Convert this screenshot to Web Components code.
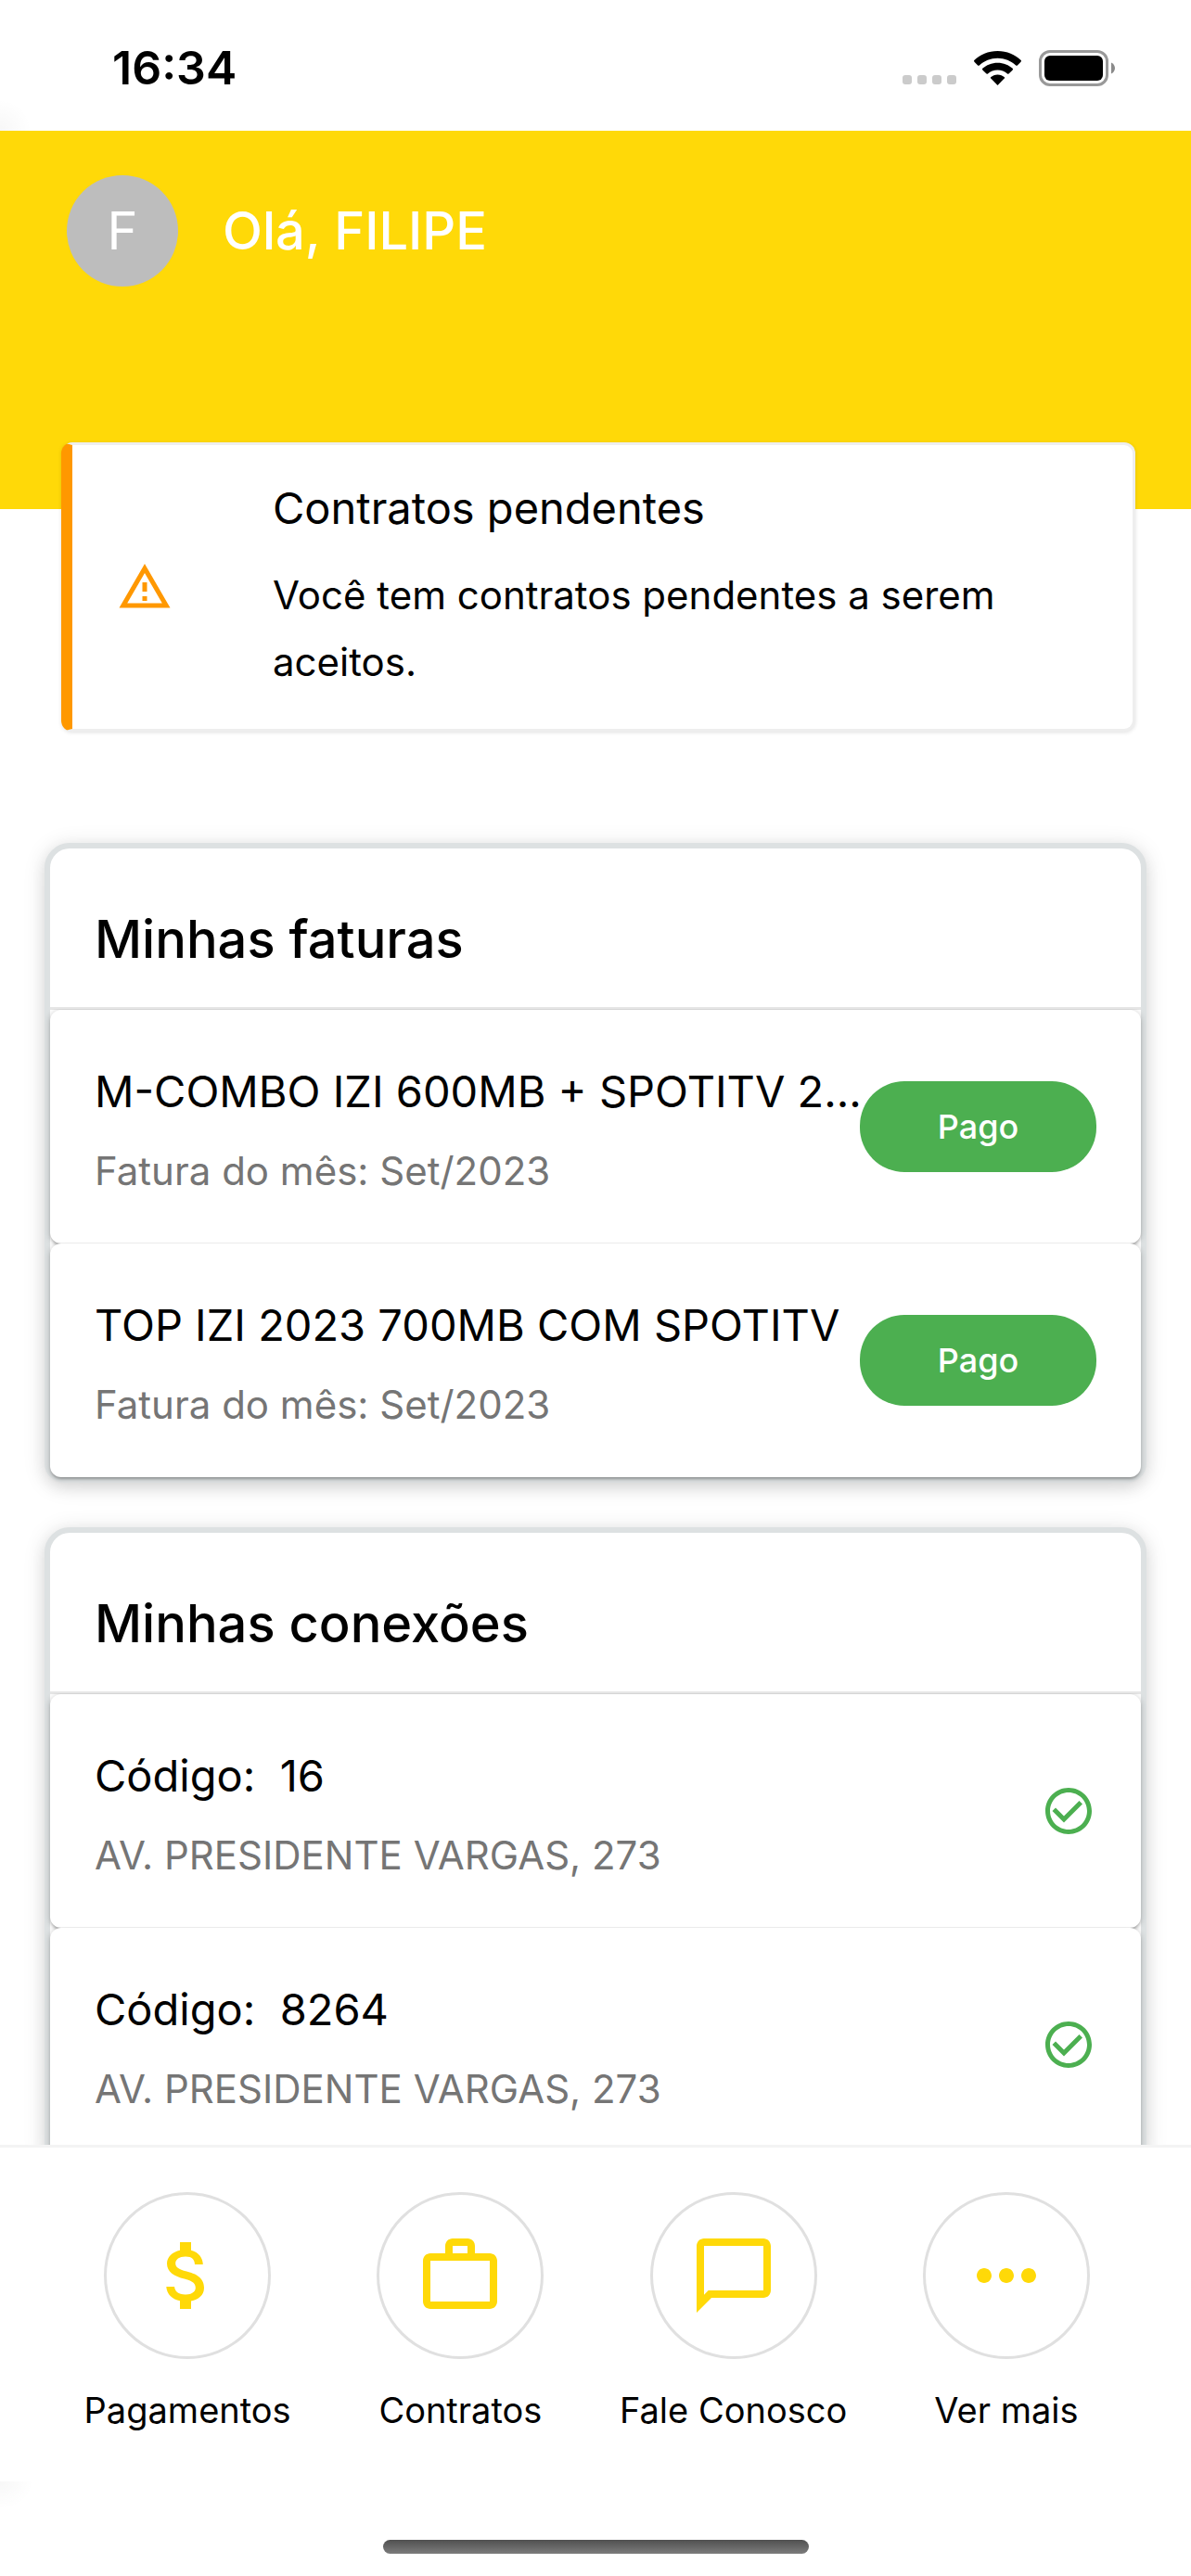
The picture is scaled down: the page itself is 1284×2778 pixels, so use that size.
<!DOCTYPE html>
<html lang="pt-BR">
<head>
<meta charset="utf-8">
<meta name="viewport" content="width=device-width, initial-scale=1">
<title>Minha conta</title>
<style>
  html, body { margin: 0; height: 100%; }
  body {
    --brand: #ffd908;
    --ok: #4caf50;
    --warn: #ff9800;
    --muted: #757575;
    --fs-title: 56px;
    --fs-lead: 47px;
    --fs-body: 42px;
    --fs-label: 38px;
    --fs-small: 36px;
    background: #fff;
    color: #000;
    font-family: Inter, "Liberation Sans", sans-serif;
  }
</style>
</head>
<body>
<app-shell>
  <status-bar slot="top" time="16:34"></status-bar>
  <user-hero name="FILIPE"></user-hero>
  <alert-card heading="Contratos pendentes">Você tem contratos pendentes a serem aceitos.</alert-card>
  <section-card heading="Minhas faturas">
    <list-row heading="M-COMBO IZI 600MB + SPOTITV 2..." detail="Fatura do mês: Set/2023"><pill-button slot="end">Pago</pill-button></list-row>
    <list-row heading="TOP IZI 2023 700MB COM SPOTITV" detail="Fatura do mês: Set/2023"><pill-button slot="end">Pago</pill-button></list-row>
  </section-card>
  <section-card heading="Minhas conexões">
    <list-row heading="Código:&nbsp; 16" detail="AV. PRESIDENTE VARGAS, 273"><app-icon slot="end" name="check"></app-icon></list-row>
    <list-row heading="Código:&nbsp; 8264" detail="AV. PRESIDENTE VARGAS, 273"><app-icon slot="end" name="check"></app-icon></list-row>
  </section-card>
  <bottom-nav slot="bottom">
    <nav-item icon="money">Pagamentos</nav-item>
    <nav-item icon="work">Contratos</nav-item>
    <nav-item icon="chat">Fale Conosco</nav-item>
    <nav-item icon="more">Ver mais</nav-item>
  </bottom-nav>
</app-shell>

<script>
const ICONS = {
  warning: 'M12 5.99L19.53 19H4.47L12 5.99M12 2L1 21h22L12 2zm1 14h-2v2h2v-2zm0-6h-2v4h2v-4z',
  check: 'M16.59 7.58L10 14.17l-3.59-3.58L5 12l5 5 8-8zM12 2C6.48 2 2 6.48 2 12s4.48 10 10 10 10-4.48 10-10S17.52 2 12 2zm0 18c-4.42 0-8-3.58-8-8s3.58-8 8-8 8 3.58 8 8-3.58 8-8 8z',
  money: 'M11.8 10.9c-2.27-.59-3-1.2-3-2.15 0-1.09 1.01-1.85 2.7-1.85 1.78 0 2.44.85 2.5 2.1h2.21c-.07-1.72-1.12-3.3-3.21-3.81V3h-3v2.16c-1.94.42-3.5 1.68-3.5 3.61 0 2.31 1.91 3.46 4.7 4.13 2.5.6 3 1.48 3 2.41 0 .69-.49 1.79-2.7 1.79-2.06 0-2.87-.92-2.98-2.1h-2.2c.12 2.19 1.76 3.42 3.68 3.83V21h3v-2.15c1.95-.37 3.5-1.5 3.5-3.55 0-2.84-2.43-3.81-4.7-4.4z',
  work: 'M14 6V4h-4v2h4zM4 8v11h16V8H4zm16-2c1.11 0 2 .89 2 2v11c0 1.11-.89 2-2 2H4c-1.11 0-2-.89-2-2V8c0-1.11.89-2 2-2h4V4c0-1.11.89-2 2-2h4c1.11 0 2 .89 2 2v2h4z',
  chat: 'M4 4h16v12H5.17L4 17.17V4m0-2c-1.1 0-2 .9-2 2v18l4-4h14c1.1 0 2-.9 2-2V4c0-1.1-.9-2-2-2H4z',
  more: 'M6 10c-1.1 0-2 .9-2 2s.9 2 2 2 2-.9 2-2-.9-2-2-2zm12 0c-1.1 0-2 .9-2 2s.9 2 2 2 2-.9 2-2-.9-2-2-2zm-6 0c-1.1 0-2 .9-2 2s.9 2 2 2 2-.9 2-2-.9-2-2-2z'
};

class BaseElement extends HTMLElement {
  connectedCallback() {
    if (!this.shadowRoot) this.attachShadow({ mode: 'open' }).innerHTML = this.render();
  }
  attr(name) { return this.getAttribute(name) || ''; }
}

customElements.define('app-icon', class extends BaseElement {
  render() {
    return `<style>
      :host { display: block; flex: none; width: 60px; height: 60px; color: var(--ok); }
      svg { display: block; width: 100%; height: 100%; fill: currentColor; }
    </style>
    <svg viewBox="0 0 24 24" aria-hidden="true"><path d="${ICONS[this.attr('name')]}"/></svg>`;
  }
});

customElements.define('app-shell', class extends BaseElement {
  render() {
    return `<style>
      :host { display: flex; flex-direction: column; height: 100vh; }
      main { flex: 1; min-height: 0; overflow-y: auto; scrollbar-width: none; }
    </style>
    <slot name="top"></slot><main><slot></slot></main><slot name="bottom"></slot>`;
  }
});

customElements.define('status-bar', class extends BaseElement {
  render() {
    return `<style>
      :host {
        display: flex; justify-content: space-between; align-items: center; flex: none;
        box-sizing: border-box; height: 141px; padding: 5px 82px 0 121px;
        background: radial-gradient(circle at 0 100%, rgba(0,0,0,.03), transparent 34px);
      }
      time { font-size: 50px; font-weight: 600; line-height: 60px; }
      .icons { display: flex; align-items: center; }
      svg { display: block; }
      .dots { margin: 26px 19px 0 0; }
      .wifi { margin-right: 19px; }
    </style>
    <time>${this.attr('time')}</time>
    <div class="icons">
      <svg class="dots" width="58" height="10" fill="#cbcbcb"><rect width="10" height="10" rx="3"/><rect x="16" width="10" height="10" rx="3"/><rect x="32" width="10" height="10" rx="3"/><rect x="48" width="10" height="10" rx="3"/></svg>
      <svg class="wifi" width="51" height="37" viewBox="0 0 51 37">
        <path d="M25.500 0C35.500 0 44.500 3.900 51 10.300Q51 11.300 50.300 12L46.600 15.700Q45.800 16 45.200 15.500C40 10.600 33 7.700 25.500 7.700S11 10.600 5.800 15.500Q5.200 16 4.400 15.700L.7 12Q0 11.300 0 10.300C6.500 3.900 15.500 0 25.500 0z"/>
        <path d="M25.500 12.700C31.800 12.700 37.600 15.100 42 19.100Q42 20.200 41.500 20.700L37.500 24.600Q36.700 25 36 24.400C33.200 21.900 29.500 20.500 25.500 20.500S17.800 21.900 15 24.400Q14.300 25 13.500 24.600L9.500 20.700Q9 20.200 9 19.100C13.400 15.100 19.200 12.700 25.500 12.700z"/>
        <path d="M25.500 25.500C28.400 25.500 31 26.600 33 28.300Q33.300 29 32.800 29.600L25.500 37L18.200 29.600Q17.700 29 18 28.300C20 26.600 22.600 25.500 25.500 25.500z"/>
      </svg>
      <svg width="82" height="39" viewBox="0 0 82 39">
        <rect x="1.500" y="1.500" width="72" height="36" rx="10.500" fill="none" stroke="#999" stroke-width="3"/>
        <rect x="6" y="6" width="63" height="27" rx="6"/>
        <path d="M78 13.500C80.500 14.500 82 17 82 19.500S80.500 24.500 78 25.500z" fill="#8a8a8a"/>
      </svg>
    </div>`;
  }
});

customElements.define('user-hero', class extends BaseElement {
  render() {
    const name = this.attr('name');
    return `<style>
      :host {
        display: flex; align-items: flex-start; box-sizing: border-box; height: 408px;
        padding: 48px 72px; background: var(--brand); color: #fff;
      }
      .user { display: flex; align-items: center; gap: 48px; font-size: var(--fs-title); line-height: 120px; }
      .avatar { width: 120px; height: 120px; border-radius: 50%; background: #bdbdbd; text-align: center; }
      h1 { margin: 0; font: inherit; font-weight: 500; }
    </style>
    <div class="user"><span class="avatar">${name[0]}</span><h1>Olá, ${name}</h1></div>`;
  }
});

customElements.define('alert-card', class extends BaseElement {
  render() {
    return `<style>
      :host { display: block; position: relative; margin: -72px 60px 0 66px; }
      section {
        display: flex; align-items: center; box-sizing: border-box; padding: 32px 48px;
        background: #fff; border: 3px solid #eee; border-left: 12px solid var(--warn);
        border-radius: 12px; box-shadow: 0 1px 4px rgba(0,0,0,.12);
      }
      app-icon { color: var(--warn); margin-right: 108px; }
      .text { padding-bottom: 4px; }
      h2 { margin: 0 0 22px; font-size: var(--fs-lead); font-weight: 400; line-height: 72px; }
      p { margin: 0; font-size: var(--fs-body); line-height: 72px; }
    </style>
    <section>
      <app-icon name="warning"></app-icon>
      <div class="text"><h2>${this.attr('heading')}</h2><p><slot></slot></p></div>
    </section>`;
  }
});

customElements.define('section-card', class extends BaseElement {
  render() {
    return `<style>
      :host { display: block; margin: 48px; }
      :host(:first-of-type) { margin-top: 120px; }
      section {
        background: #fff; border: 6px solid #dde1e2; border-radius: 27px 27px 21px 21px;
        box-shadow: 0 3px 24px rgba(0,0,0,.12), 0 6px 15px rgba(0,0,0,.08);
      }
      h2 {
        margin: 0; padding: 62px 48px 37px; font-size: var(--fs-title); font-weight: 500; line-height: 72px;
        border-bottom: 3px solid #e6e6e6;
      }
    </style>
    <section><h2>${this.attr('heading')}</h2><slot></slot></section>`;
  }
});

customElements.define('list-row', class extends BaseElement {
  render() {
    return `<style>
      :host {
        display: flex; align-items: center; box-sizing: border-box; padding: 48px;
        background: #fff; border-radius: 12px;
        box-shadow: 0 3px 3px -1px rgba(0,0,0,.24), 0 1px 6px rgba(0,0,0,.24);
        clip-path: inset(-1px -9px -9px);
      }
      .text { flex: 1; min-width: 0; padding-top: 4px; }
      h3, p { margin: 0; font-weight: 400; white-space: nowrap; }
      h3 { font-size: var(--fs-lead); line-height: 72px; margin-bottom: 20px; }
      p { font-size: var(--fs-body); line-height: 60px; color: var(--muted); }
    </style>
    <div class="text"><h3>${this.attr('heading')}</h3><p>${this.attr('detail')}</p></div>
    <slot name="end"></slot>`;
  }
});

customElements.define('pill-button', class extends BaseElement {
  render() {
    return `<style>
      :host { display: block; flex: none; }
      button {
        display: block; width: 255px; height: 98px; padding: 0; border: 0; border-radius: 48px;
        background: var(--ok); color: #fff; font: 500 var(--fs-small)/48px Inter, "Liberation Sans", sans-serif;
      }
    </style><button type="button"><slot></slot></button>`;
  }
});

customElements.define('bottom-nav', class extends BaseElement {
  render() {
    return `<style>
      :host { display: block; flex: none; background: #fff; border-top: 3px solid #f4f4f4; }
      nav { display: grid; grid-template-columns: repeat(4, 1fr); padding: 48px 52px 53px 55px; }
      .home {
        display: flex; justify-content: center; padding: 63px 0 24px;
        background: radial-gradient(ellipse 36px 30px at 0 0, rgba(0,0,0,.03), transparent);
      }
      .home span { width: 459px; height: 15px; border-radius: 8px; background: linear-gradient(#505050, #7c7c7c); }
    </style>
    <nav><slot></slot></nav><div class="home"><span></span></div>`;
  }
});

customElements.define('nav-item', class extends BaseElement {
  render() {
    return `<style>
      :host { display: block; }
      a { display: flex; flex-direction: column; align-items: center; gap: 31px; color: inherit; text-decoration: none; font-size: var(--fs-label); line-height: 48px; white-space: nowrap; }
      .ring { display: grid; place-items: center; box-sizing: border-box; width: 180px; height: 180px; border: 3px solid #e0e0e0; border-radius: 50%; }
      app-icon { width: 96px; height: 96px; color: var(--brand); }
    </style>
    <a href="#"><span class="ring"><app-icon name="${this.attr('icon')}"></app-icon></span><span><slot></slot></span></a>`;
  }
});
</script>
</body>
</html>
